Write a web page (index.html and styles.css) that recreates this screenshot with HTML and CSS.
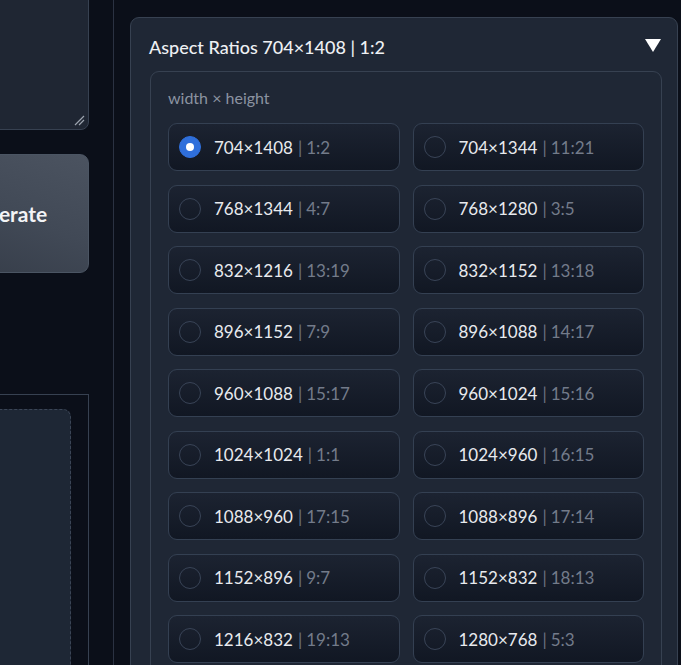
FILE: index.html
```html
<!DOCTYPE html>
<html>
<head>
<meta charset="utf-8">
<link rel="stylesheet" href="styles.css">
</head>
<body>
<div class="page">
  <div class="left">
    <div class="prompt">
      <svg class="grip" width="12" height="12" viewBox="0 0 12 12"><path d="M2 11 L11 2 M6 11 L11 6" stroke="#9ca3af" stroke-width="1.2" fill="none"/></svg>
    </div>
    <button class="generate">Generate</button>
    <div class="gallery">
      <div class="drop"></div>
    </div>
  </div>
  <div class="sep"></div>
  <div class="right">
    <div class="card">
      <div class="card-head">
        <span class="card-title">Aspect Ratios 704×1408 | 1:2</span>
        <span class="caret"></span>
      </div>
      <div class="block">
        <div class="label">width × height</div>
        <div class="grid">
          <label class="item"><span class="radio on"></span><span class="dim">704×1408</span><span class="bar">|</span><span class="ratio">1:2</span></label>
          <label class="item"><span class="radio"></span><span class="dim">704×1344</span><span class="bar">|</span><span class="ratio">11:21</span></label>
          <label class="item"><span class="radio"></span><span class="dim">768×1344</span><span class="bar">|</span><span class="ratio">4:7</span></label>
          <label class="item"><span class="radio"></span><span class="dim">768×1280</span><span class="bar">|</span><span class="ratio">3:5</span></label>
          <label class="item"><span class="radio"></span><span class="dim">832×1216</span><span class="bar">|</span><span class="ratio">13:19</span></label>
          <label class="item"><span class="radio"></span><span class="dim">832×1152</span><span class="bar">|</span><span class="ratio">13:18</span></label>
          <label class="item"><span class="radio"></span><span class="dim">896×1152</span><span class="bar">|</span><span class="ratio">7:9</span></label>
          <label class="item"><span class="radio"></span><span class="dim">896×1088</span><span class="bar">|</span><span class="ratio">14:17</span></label>
          <label class="item"><span class="radio"></span><span class="dim">960×1088</span><span class="bar">|</span><span class="ratio">15:17</span></label>
          <label class="item"><span class="radio"></span><span class="dim">960×1024</span><span class="bar">|</span><span class="ratio">15:16</span></label>
          <label class="item"><span class="radio"></span><span class="dim">1024×1024</span><span class="bar">|</span><span class="ratio">1:1</span></label>
          <label class="item"><span class="radio"></span><span class="dim">1024×960</span><span class="bar">|</span><span class="ratio">16:15</span></label>
          <label class="item"><span class="radio"></span><span class="dim">1088×960</span><span class="bar">|</span><span class="ratio">17:15</span></label>
          <label class="item"><span class="radio"></span><span class="dim">1088×896</span><span class="bar">|</span><span class="ratio">17:14</span></label>
          <label class="item"><span class="radio"></span><span class="dim">1152×896</span><span class="bar">|</span><span class="ratio">9:7</span></label>
          <label class="item"><span class="radio"></span><span class="dim">1152×832</span><span class="bar">|</span><span class="ratio">18:13</span></label>
          <label class="item"><span class="radio"></span><span class="dim">1216×832</span><span class="bar">|</span><span class="ratio">19:13</span></label>
          <label class="item"><span class="radio"></span><span class="dim">1280×768</span><span class="bar">|</span><span class="ratio">5:3</span></label>
        </div>
      </div>
    </div>
  </div>
</div>
</body>
</html>
```
FILE: styles.css
```css
html, body {
  margin: 0;
  padding: 0;
  background: #0b0f19;
  overflow: hidden;
  height: 665px;
}
body {
  font-family: Lato, "Noto Sans", sans-serif;
  color: #e5e7eb;
}
.page {
  display: flex;
  align-items: flex-start;
  height: 665px;
  overflow: hidden;
}
.left {
  width: 170px;
  margin-left: -81px;
  flex: none;
  display: flex;
  flex-direction: column;
}
.prompt {
  position: relative;
  height: 198px;
  margin-top: -70px;
  background: #1f2633;
  border: 1px solid #374151;
  border-radius: 8px;
}
.grip {
  position: absolute;
  right: 3px;
  bottom: 3px;
}
.generate {
  margin-top: 24px;
  height: 119px;
  border: 1px solid #4b5563;
  border-radius: 9px;
  background: linear-gradient(20deg, #343b47 0%, #414956 50%, #4b5360 100%);
  color: #f3f4f6;
  font-family: Lato, "Noto Sans", sans-serif;
  font-weight: 700;
  font-size: 21px;
  padding: 0;
}
.gallery {
  margin-top: 121px;
  height: 300px;
  border-top: 1px solid #374151;
  border-right: 1px solid #374151;
  padding: 14px 17px 0 0;
}
.drop {
  height: 300px;
  background: #1e2735;
  border-top: 1px dashed #3b4556;
  border-right: 1px dashed #3b4556;
  border-top-right-radius: 8px;
}
.sep {
  flex: none;
  width: 1px;
  height: 665px;
  margin-left: 24px;
  background: #2b3242;
}
.right {
  flex: none;
  width: 548px;
  margin-left: 16px;
  padding-top: 17px;
}
.card {
  background: #1f2735;
  border: 1px solid #374151;
  border-radius: 9px;
  height: 660px;
}
.card-head {
  height: 53px;
  display: flex;
  align-items: center;
  justify-content: space-between;
  padding: 0 16px 0 18px;
}
.card-title {
  font-size: 18px;
  font-weight: 500;
  color: #eef0f3;
  padding-top: 4px;
}
.caret {
  width: 0;
  height: 0;
  border-left: 8px solid transparent;
  border-right: 8px solid transparent;
  border-top: 13px solid #ffffff;
  margin-top: 1px;
}
.block {
  margin: 0 15px 0 19px;
  border: 1px solid #374151;
  border-radius: 9px;
  padding: 16px 17px;
}
.label {
  font-size: 16px;
  line-height: 20px;
  color: #8b93a1;
  margin-bottom: 15px;
}
.grid {
  display: grid;
  grid-template-columns: 1fr 1fr;
  column-gap: 13px;
  row-gap: 13.5px;
}
.item {
  height: 48px;
  box-sizing: border-box;
  display: flex;
  align-items: center;
  padding-left: 10px;
  border: 1px solid #344052;
  border-radius: 9px;
  background: linear-gradient(180deg, #1c2331 0%, #111723 100%);
  font-size: 17px;
}
.radio {
  width: 22px;
  height: 22px;
  box-sizing: border-box;
  border-radius: 50%;
  border: 1px solid #394457;
  margin-right: 13px;
  flex: none;
  position: relative;
}
.radio.on {
  background: #2f6fdb;
  border-color: #2f6fdb;
}
.radio.on::after {
  content: "";
  position: absolute;
  left: 6px;
  top: 6px;
  width: 8px;
  height: 8px;
  border-radius: 50%;
  background: #ffffff;
}
.dim {
  color: #e8eaee;
}
.bar {
  color: #6b7280;
  margin: 0 4px 0 5px;
}
.ratio {
  color: #737b8a;
}
```
